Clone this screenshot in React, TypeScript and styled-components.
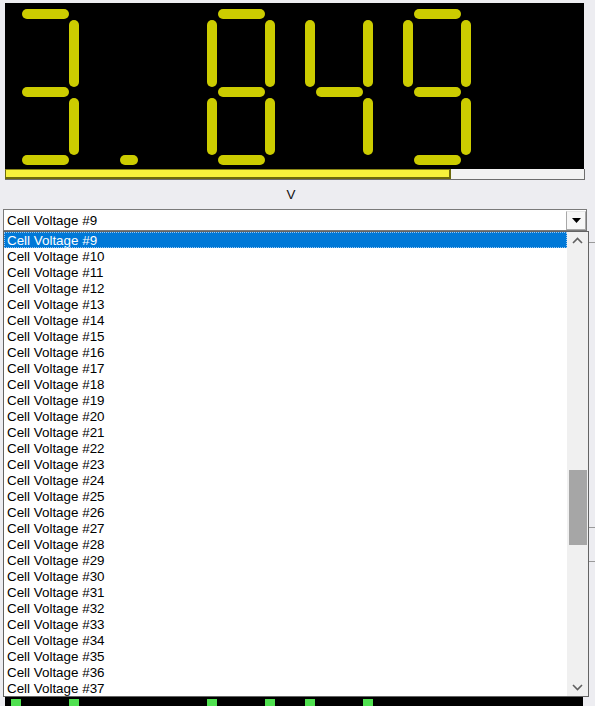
import React from "react";
import styled, { createGlobalStyle } from "styled-components";

const Global = createGlobalStyle`
  html, body { margin: 0; padding: 0; }
  body {
    background: #ededf1;
    font-family: "Liberation Sans", Arial, sans-serif;
    width: 595px;
    height: 706px;
    overflow: hidden;
  }
`;

const Page = styled.div`
  display: flex;
  flex-direction: column;
  padding-top: 3px;
  width: 595px;
`;

const Meter = styled.div`
  display: flex;
  flex-direction: column;
  margin-left: 5px;
  width: 580px;
`;

const Screen = styled.svg`
  display: block;
  width: 579px;
  height: 166px;
  background: #000;
`;

const Track = styled.div`
  width: 579px;
  height: 10px;
  background: #f3f3f3;
  border-right: 1px solid #6e6e6e;
  border-bottom: 1px solid #6e6e6e;
  display: flex;
`;

const Fill = styled.div`
  height: 100%;
  box-sizing: border-box;
  background: #f6f23c;
  border-top: 1px solid #8a8614;
  border-bottom: 2px solid #6c6a0c;
  border-left: 1px solid #6c6a0c;
  border-right: 2px solid #6c6a0c;
`;

const UnitRow = styled.div`
  height: 29px;
  width: 582px;
  display: flex;
  align-items: center;
  justify-content: center;
  font-size: 13.4px;
  color: #111;
`;

const Combo = styled.div`
  margin-left: 3px;
  width: 584px;
  height: 22px;
  box-sizing: border-box;
  border: 1px solid #7a7a7a;
  background: #fff;
  display: flex;
  align-items: center;
`;

const ComboValue = styled.span`
  flex: 1;
  padding-left: 3px;
  font-size: 13.4px;
  color: #000;
`;

const DropButton = styled.div`
  width: 20px;
  height: 19px;
  box-sizing: border-box;
  border: 1px solid #a8a8a8;
  border-top-color: #e6e6e6;
  background: #f7f7f7;
  display: flex;
  align-items: center;
  justify-content: center;
`;

const ListRow = styled.div`
  display: flex;
`;

const ListBox = styled.div`
  margin-left: 3px;
  width: 586px;
  height: 466px;
  box-sizing: border-box;
  border: 1px solid #646464;
  background: #fff;
  display: flex;
`;

const Items = styled.div`
  flex: 1;
  display: flex;
  flex-direction: column;
`;

const Item = styled.div<{ $selected?: boolean }>`
  height: 16px;
  line-height: 16px;
  padding-left: 3px;
  padding-top: 1px;
  font-size: 13.4px;
  white-space: nowrap;
  box-sizing: border-box;
  color: ${(p) => (p.$selected ? "#fff" : "#000")};
  background: ${(p) => (p.$selected ? "#0078d7" : "transparent")};
  outline: ${(p) => (p.$selected ? "1px dotted #9cc8f0" : "none")};
  outline-offset: -1px;
`;

const ScrollBar = styled.div`
  width: 21px;
  background: #f0f0f0;
  display: flex;
  flex-direction: column;
  align-items: center;
`;

const ArrowBox = styled.div`
  width: 21px;
  height: 17px;
  display: flex;
  align-items: center;
  justify-content: center;
`;

const ScrollTrack = styled.div`
  flex: 1;
  width: 100%;
  display: flex;
  flex-direction: column;
  align-items: center;
`;

const Thumb = styled.div`
  width: 18px;
  height: 75px;
  margin-top: 221px;
  background: #a6a6a6;
`;

const Gutter = styled.div`
  flex: 1;
  display: flex;
  flex-direction: column;
`;

const GutterLine = styled.div<{ $top: number }>`
  margin-top: ${(p) => p.$top}px;
  height: 1px;
  background: #9a9a9a;
`;

const BottomStrip = styled.svg`
  display: block;
  margin-left: 5px;
  width: 578px;
  height: 9px;
  background: #000;
`;

type Seg = "a" | "b" | "c" | "d" | "e" | "f" | "g";

const SEG_RECTS: Record<Seg, [number, number, number, number]> = {
  a: [11, 6, 47, 10],
  b: [58, 17, 10, 67],
  c: [58, 95, 10, 57],
  d: [11, 152, 47, 10],
  e: [0, 95, 10, 57],
  f: [0, 17, 10, 67],
  g: [11, 84, 47, 10],
};

const DIGITS: Record<string, Seg[]> = {
  "3": ["a", "b", "c", "d", "g"],
  "8": ["a", "b", "c", "d", "e", "f", "g"],
  "4": ["b", "c", "f", "g"],
  "9": ["a", "b", "c", "d", "f", "g"],
};

const YELLOW = "#cccc00";

const Digit: React.FC<{ x: number; ch: string }> = ({ x, ch }) => (
  <g>
    {(DIGITS[ch] || []).map((s) => {
      const [rx, ry, w, h] = SEG_RECTS[s];
      return <rect key={s} x={x + rx} y={ry} width={w} height={h} rx={5} ry={5} fill={YELLOW} />;
    })}
  </g>
);

const value = 3.849;
const maxValue = 5;

const items = Array.from({ length: 29 }, (_, i) => `Cell Voltage #${i + 9}`);

export default function App() {
  const slot = (k: number) => 6 + 98 * k;
  const greenXs = [6, 64, 202, 260, 300, 358];
  return (
    <Page>
      <Global />
      <Meter>
        <Screen viewBox="0 0 579 166">
          <Digit x={slot(0)} ch="3" />
          <rect x={slot(1) + 11} y={152} width={18} height={10} rx={5} fill={YELLOW} />
          <Digit x={slot(2)} ch="8" />
          <Digit x={slot(3)} ch="4" />
          <Digit x={slot(4)} ch="9" />
        </Screen>
        <Track>
          <Fill style={{ width: `${(value / maxValue) * 579}px` }} />
        </Track>
      </Meter>
      <UnitRow>V</UnitRow>
      <Combo>
        <ComboValue>Cell Voltage #9</ComboValue>
        <DropButton>
          <svg width="9" height="5" viewBox="0 0 9 5">
            <path d="M0 0 L9 0 L4.5 5 Z" fill="#000" />
          </svg>
        </DropButton>
      </Combo>
      <ListRow>
        <ListBox>
          <Items>
            {items.map((t, i) => (
              <Item key={t} $selected={i === 0}>
                {t}
              </Item>
            ))}
          </Items>
          <ScrollBar>
            <ArrowBox>
              <svg width="11" height="7" viewBox="0 0 11 7">
                <path d="M1 6 L5.5 1.5 L10 6" fill="none" stroke="#606060" strokeWidth="1.6" />
              </svg>
            </ArrowBox>
            <ScrollTrack>
              <Thumb />
            </ScrollTrack>
            <ArrowBox>
              <svg width="11" height="7" viewBox="0 0 11 7">
                <path d="M1 1 L5.5 5.5 L10 1" fill="none" stroke="#606060" strokeWidth="1.6" />
              </svg>
            </ArrowBox>
          </ScrollBar>
        </ListBox>
        <Gutter>
          <GutterLine $top={11} />
          <GutterLine $top={284} />
          <GutterLine $top={33} />
        </Gutter>
      </ListRow>
      <BottomStrip viewBox="0 0 578 9">
        {greenXs.map((x) => (
          <rect key={x} x={x} y={2} width={10} height={8} fill="#4fe04f" />
        ))}
      </BottomStrip>
    </Page>
  );
}
